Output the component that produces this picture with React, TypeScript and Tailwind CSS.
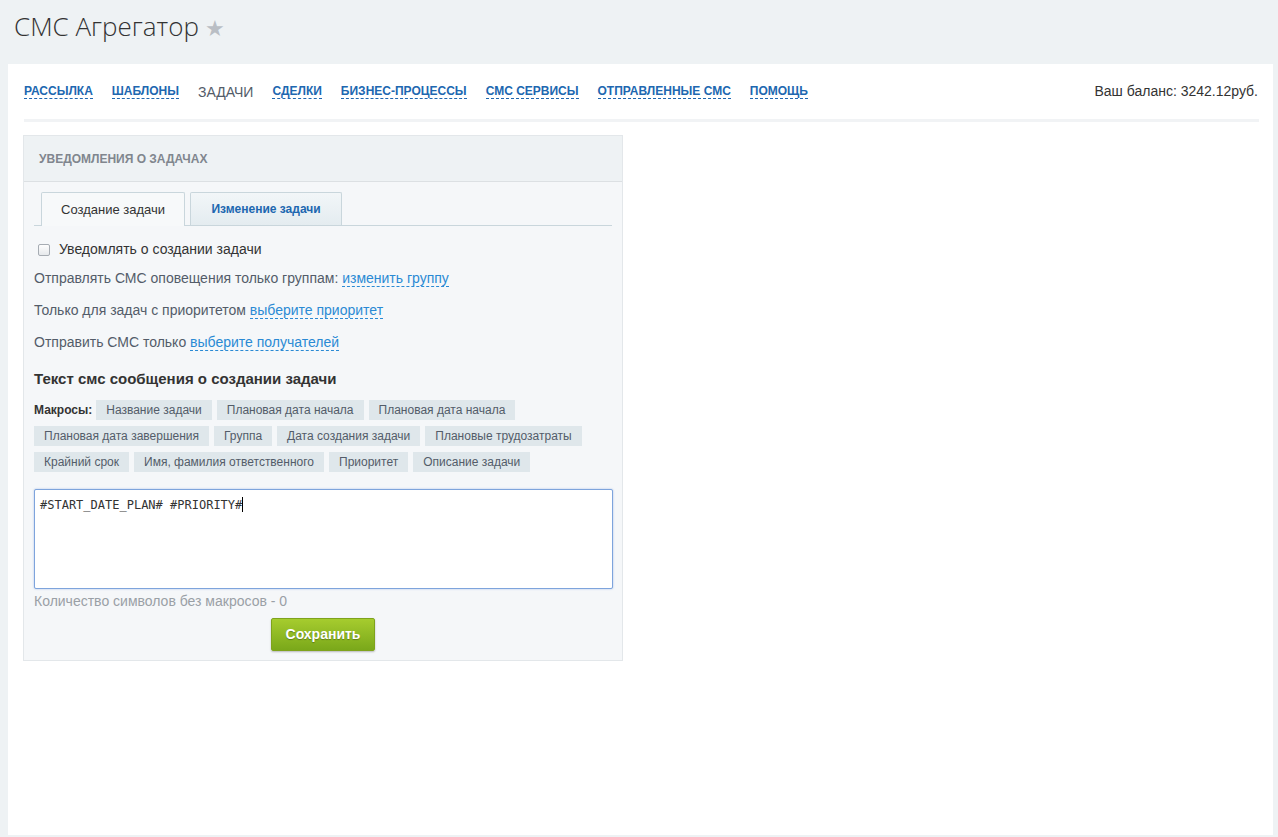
const navItems = [
  { label: "РАССЫЛКА", link: true },
  { label: "ШАБЛОНЫ", link: true },
  { label: "ЗАДАЧИ", link: false },
  { label: "СДЕЛКИ", link: true },
  { label: "БИЗНЕС-ПРОЦЕССЫ", link: true },
  { label: "СМС СЕРВИСЫ", link: true },
  { label: "ОТПРАВЛЕННЫЕ СМС", link: true },
  { label: "ПОМОЩЬ", link: true },
];

const macroRows = [
  ["Название задачи", "Плановая дата начала", "Плановая дата начала"],
  ["Плановая дата завершения", "Группа", "Дата создания задачи", "Плановые трудозатраты"],
  ["Крайний срок", "Имя, фамилия ответственного", "Приоритет", "Описание задачи"],
];

function DashedLink({ children }: { children: React.ReactNode }) {
  return (
    <span className="cursor-pointer border-b border-dashed border-[#2a8ad4] text-[#2a8ad4]">
      {children}
    </span>
  );
}

export default function App() {
  return (
    <div className="min-h-screen bg-[#eef2f4] font-['Liberation_Sans',Arial,sans-serif] text-[#535c69]">
      <header className="flex h-16 items-start px-[14px] pt-[8px]">
        <h1 className="font-['Open_Sans',sans-serif] text-[26px] font-light leading-[36px] text-[#333]">
          СМС Агрегатор
          <span className="ml-[6px] text-[22px] text-[#b9bec4]">★</span>
        </h1>
      </header>

      <main className="ml-2 mr-[5px] h-[771px] bg-white pl-4 pr-[15px]">
        <div className="flex items-center justify-between pb-[17px] pt-[17px]">
          <nav className="flex items-center gap-[19px] text-[12px]">
            {navItems.map((item) =>
              item.link ? (
                <span
                  key={item.label}
                  className="border-b border-dashed border-[#2067b0] font-bold leading-[14px] text-[#2067b0]"
                >
                  {item.label}
                </span>
              ) : (
                <span key={item.label} className="text-[14px] leading-[14px] text-[#535c69]">
                  {item.label}
                </span>
              )
            )}
          </nav>
          <div className="text-[14px] text-[#333]">Ваш баланс: 3242.12руб.</div>
        </div>
        <div className="-mr-px h-[3px] bg-[#f1f3f5]" />

        <section className="-ml-px mt-[13px] w-[600px] border border-[#e3e7ea] bg-[#f5f7f9]">
          <div className="flex h-[46px] items-center border-b border-[#dce0e3] bg-[#eef2f4] px-[15px]">
            <span className="text-[12px] font-bold text-[#80868e]">УВЕДОМЛЕНИЯ О ЗАДАЧАХ</span>
          </div>

          <div className="px-[10px] pb-[9px]">
            <div className="mt-[10px] flex items-end gap-[5px] border-b border-[#c9d6dc] pl-[7px]">
              <div className="-mb-px flex h-[34px] w-[144px] items-center justify-center rounded-t-[2px] border border-b-0 border-[#c9d6dc] bg-[#f7f9fa] text-[13px] text-[#333]">
                Создание задачи
              </div>
              <div className="flex h-[33px] w-[152px] items-center justify-center rounded-t-[2px] border border-b-0 border-[#c9d6dc] bg-gradient-to-b from-[#f2f6f8] to-[#e4ecf0] text-[12px] font-bold text-[#2067b0]">
                Изменение задачи
              </div>
            </div>

            <label className="mt-[13px] flex items-center gap-[9px] pl-[4px] text-[14px] text-[#333]">
              <span className="h-[12px] w-[12px] rounded-[2px] border border-[#a6acb3] bg-gradient-to-b from-[#fdfdfd] to-[#e6e9ec]" />
              Уведомлять о создании задачи
            </label>

            <p className="mt-[9px] text-[14px] leading-[18px]">
              Отправлять СМС оповещения только группам: <DashedLink>изменить группу</DashedLink>
            </p>
            <p className="mt-[14px] text-[14px] leading-[18px]">
              Только для задач с приоритетом <DashedLink>выберите приоритет</DashedLink>
            </p>
            <p className="mt-[14px] text-[14px] leading-[18px]">
              Отправить СМС только <DashedLink>выберите получателей</DashedLink>
            </p>

            <h3 className="mt-[18px] text-[15px] font-bold leading-[20px] text-[#333]">
              Текст смс сообщения о создании задачи
            </h3>

            <div className="mt-[11px] flex flex-col gap-[6px] text-[12px]">
              {macroRows.map((row, i) => (
                <div key={i} className="flex items-center gap-[5px]">
                  {i === 0 && <span className="-mr-px font-bold text-[#333]">Макросы:</span>}
                  {row.map((m, j) => (
                    <span key={j} className="flex h-[20px] items-center bg-[#dfe7eb] px-[10px] text-[#535c69]">
                      {m}
                    </span>
                  ))}
                </div>
              ))}
            </div>

            <div className="mt-[17px] h-[100px] w-[579px] rounded-[2px] border border-[#7ea4dc] bg-white px-[5px] py-[4px] font-['DejaVu_Sans_Mono',monospace] text-[12px] leading-[16px] text-[#333] shadow-[0_0_2px_rgba(110,150,220,0.6)]">
              <span>#START_DATE_PLAN# #PRIORITY#</span>
              <span className="inline-block h-[15px] w-px translate-y-[3px] bg-black" />
            </div>

            <p className="mt-[2px] text-[14px] text-[#9aa0a6]">Количество символов без макросов - 0</p>

            <div className="mt-[6px] flex justify-center">
              <button className="h-[33px] w-[104px] rounded-[2px] border border-[#7fa31c] bg-gradient-to-b from-[#a6cc2e] to-[#7aa81a] text-[14px] font-bold text-white shadow-[0_1px_2px_rgba(0,0,0,0.25)] [text-shadow:0_1px_1px_rgba(0,0,0,0.3)]">
                Сохранить
              </button>
            </div>
          </div>
        </section>
      </main>
    </div>
  );
}
